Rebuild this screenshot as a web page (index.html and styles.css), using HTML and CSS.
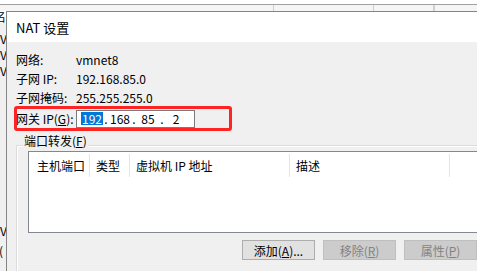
FILE: index.html
```html
<!DOCTYPE html>
<html lang="zh-CN">
<head>
    <meta charset="UTF-8">
    <title>NAT 设置</title>
    <link rel="stylesheet" href="styles.css">
</head>
<body>
    <div class="desktop">
        <!-- fenêtre derrière le dialogue -->
        <div class="bg-window">
            <div class="bg-header">
                <span class="bg-col bg-c1"></span>
                <span class="bg-col bg-c2"></span>
                <span class="bg-col bg-c3"></span>
                <span class="bg-col"></span>
            </div>
            <div class="bg-rows">
                <div class="bg-row bg-first">名</div>
                <div class="bg-row bg-gap">V</div>
                <div class="bg-row">V</div>
                <div class="bg-row">V</div>
                <div class="bg-row bg-low">V</div>
                <div class="bg-row bg-last">(</div>
            </div>
        </div>

        <div class="dialog">
            <div class="title">NAT 设置</div>
            <div class="body">
                <div class="row"><span class="label">网络:</span><span>vmnet8</span></div>
                <div class="row"><span class="label">子网 IP:</span><span>192.168.85.0</span></div>
                <div class="row"><span class="label">子网掩码:</span><span>255.255.255.0</span></div>
                <div class="row gateway">
                    <span class="label">网关 IP(<u>G</u>):</span>
                    <div class="ip-input">
                        <span class="ip-field"><span class="selected">192</span></span><span class="ip-dot">.</span>
                        <span class="ip-field">168</span><span class="ip-dot">.</span>
                        <span class="ip-field">85</span><span class="ip-dot">.</span>
                        <span class="ip-field">2</span>
                    </div>
                    <div class="highlight"></div>
                </div>

                <div class="group">
                    <div class="group-title">端口转发(<u>F</u>)</div>
                    <div class="list">
                        <div class="list-header">
                            <div class="col col-port">主机端口</div>
                            <div class="col col-type">类型</div>
                            <div class="col col-ip">虚拟机 IP 地址</div>
                            <div class="col col-desc">描述</div>
                        </div>
                    </div>
                    <div class="buttons">
                        <button type="button">添加(<u>A</u>)...</button>
                        <button type="button" disabled>移除(<u>R</u>)</button>
                        <button type="button" disabled>属性(<u>P</u>)</button>
                    </div>
                </div>
            </div>
        </div>
    </div>
</body>
</html>
```

FILE: styles.css
```css
body {
    margin: 0;
    font-family: "Noto Sans CJK SC", "Noto Sans", sans-serif;
    font-size: 12px;
    color: #000;
}
.desktop {
    position: relative;
    width: 477px;
    height: 271px;
    overflow: hidden;
    background: #fff;
}
.bg-header {
    display: flex;
    margin-top: 4px;
    height: 6px;
    border-top: 1px solid #a0a0a0;
    background: #f5f5f5;
}
.bg-col {
    flex: none;
    border-right: 1px solid #d0d0d0;
}
.bg-c1 { width: 273px; }
.bg-c2 { width: 99px; }
.bg-c3 { width: 59px; }
.bg-rows {
    width: 6px;
    height: 260px;
    overflow: hidden;
    background: #f0f0f0;
}
.bg-row {
    height: 16px;
    line-height: 16px;
    white-space: nowrap;
}
.bg-first {
    height: 12px;
    line-height: 12px;
    margin-left: -6px;
    background: #fff;
}
.bg-gap { margin-top: 8px; }
.bg-low { margin-top: 144px; }
.bg-last {
    margin-top: 4px;
    margin-left: -1px;
}
.dialog {
    position: absolute;
    left: 6px;
    top: 11px;
    width: 520px;
    height: 300px;
    border: 1px solid #858585;
    background: #f0f0f0;
}
.title {
    display: flex;
    align-items: center;
    height: 30px;
    padding-left: 9px;
    background: #fff;
    font-size: 13px;
}
.body {
    padding: 8px 0 0 9px;
}
.row {
    display: flex;
    align-items: center;
    height: 19px;
}
.label {
    width: 60px;
    flex: none;
}
.gateway {
    position: relative;
    height: 23px;
}
.ip-input {
    display: flex;
    align-items: center;
    width: 119px;
    height: 18px;
    padding-left: 4px;
    box-sizing: border-box;
    border: 1px solid #7a7a7a;
    background: #fff;
}
.ip-field {
    width: 22px;
    text-align: center;
}
.ip-dot {
    width: 6px;
    text-align: center;
}
.selected {
    display: inline-block;
    line-height: 13px;
    padding: 0 1px;
    background: #0078d7;
    color: #fff;
}
.highlight {
    position: absolute;
    left: -2px;
    top: -1px;
    width: 218px;
    height: 25px;
    box-sizing: border-box;
    border: 3px solid #ff2424;
    border-radius: 3px;
}
.group {
    position: relative;
    width: 465px;
    height: 200px;
    margin-top: 15px;
    padding: 5px 0 0 11px;
    box-sizing: border-box;
    border: 1px solid #dcdcdc;
    box-shadow: inset 1px 1px #fff;
}
.group-title {
    position: absolute;
    left: 6px;
    top: -13px;
    padding: 0 1px;
    line-height: 16px;
    background: #f0f0f0;
}
.list {
    height: 82px;
    box-sizing: border-box;
    border: 1px solid #828790;
    background: #fff;
}
.list-header {
    display: flex;
    padding-top: 2px;
}
.col {
    flex: none;
    height: 23px;
    line-height: 23px;
    padding-left: 6px;
    box-sizing: border-box;
    border-right: 1px solid #e5e5e5;
    white-space: nowrap;
}
.col-port { width: 61px; padding-left: 8px; }
.col-type { width: 40px; }
.col-ip { width: 160px; }
.col-desc { width: 160px; }
.buttons {
    display: flex;
    justify-content: flex-end;
    gap: 8px;
    margin-top: 7px;
    padding-right: 3px;
}
button {
    width: 73px;
    height: 20px;
    padding: 0;
    font-family: inherit;
    font-size: 12px;
    color: #000;
    background: #e1e1e1;
    border: 1px solid #adadad;
}
button:disabled {
    color: #838383;
    background: #cccccc;
    border-color: #bfbfbf;
}
```
